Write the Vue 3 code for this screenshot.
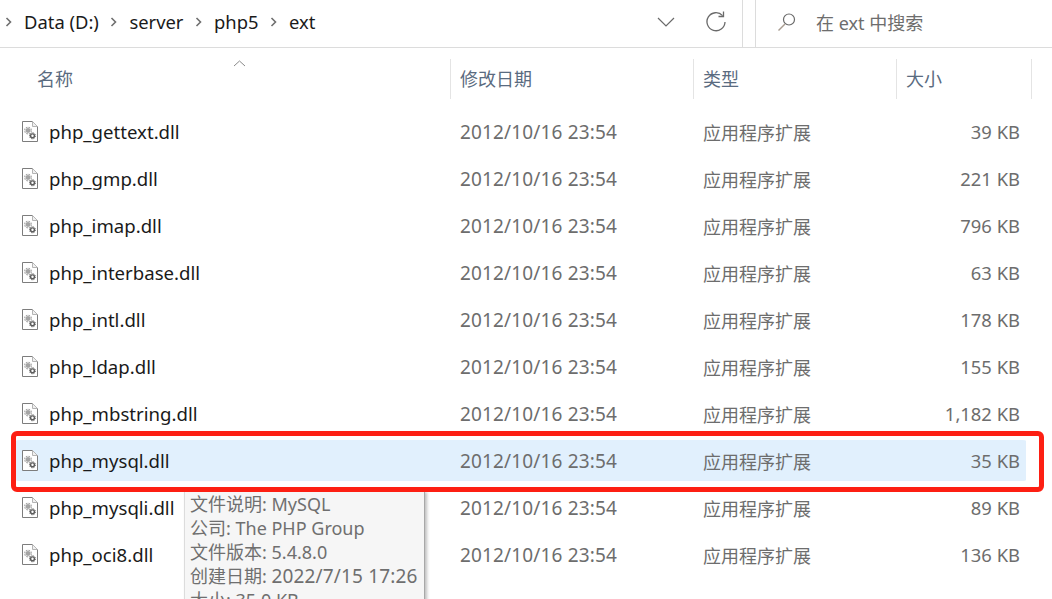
<script setup>
const files = [
  { name: 'php_gettext.dll', size: '39 KB' },
  { name: 'php_gmp.dll', size: '221 KB' },
  { name: 'php_imap.dll', size: '796 KB' },
  { name: 'php_interbase.dll', size: '63 KB' },
  { name: 'php_intl.dll', size: '178 KB' },
  { name: 'php_ldap.dll', size: '155 KB' },
  { name: 'php_mbstring.dll', size: '1,182 KB' },
  { name: 'php_mysql.dll', size: '35 KB', hover: true },
  { name: 'php_mysqli.dll', size: '89 KB' },
  { name: 'php_oci8.dll', size: '136 KB' },
]
const crumbs = ['Data (D:)', 'server', 'php5', 'ext']
const columns = ['修改日期', '类型', '大小']
const tips = [
  { label: '文件说明:', value: 'MySQL' },
  { label: '公司:', value: 'The PHP Group' },
  { label: '文件版本:', value: '5.4.8.0' },
  { label: '创建日期:', value: '2022/7/15 17:26', wide: true },
  { label: '大小:', value: '35.0 KB' },
]
</script>

<template>
  <div class="explorer">
    <div class="topbar">
      <div class="address">
        <div class="crumbs">
          <template v-for="c in crumbs" :key="c">
            <svg class="chev" width="8" height="12" viewBox="0 0 8 12">
              <path d="M1.5 2 L5.5 6 L1.5 10" fill="none" stroke="#6f6f6f" stroke-width="1.6" />
            </svg>
            <span class="crumb">{{ c }}</span>
          </template>
        </div>
        <svg class="drop" width="18" height="10" viewBox="0 0 18 10">
          <path d="M1 1 L9 9 L17 1" fill="none" stroke="#6a6a6a" stroke-width="1.2" />
        </svg>
        <svg class="refresh" width="22" height="22" viewBox="0 0 22 22">
          <path d="M17.6 4.6 A9 9 0 1 0 20 11" fill="none" stroke="#6a6a6a" stroke-width="1.3" />
          <path d="M18.5 0.5 V5.5 H13.5" fill="none" stroke="#6a6a6a" stroke-width="1.3" />
        </svg>
      </div>
      <div class="search">
        <svg width="20" height="20" viewBox="0 0 20 20">
          <circle cx="12" cy="7.5" r="5.5" fill="none" stroke="#6a6a6a" stroke-width="1.2" />
          <path d="M8 12 L1.5 18.5" fill="none" stroke="#a89c90" stroke-width="1.4" />
        </svg>
        <span class="search-text">在 ext 中搜索</span>
      </div>
    </div>

    <div class="header">
      <svg class="sort" width="13" height="7" viewBox="0 0 13 7">
        <path d="M1 6 L6.5 1 L12 6" fill="none" stroke="#8a8a8a" stroke-width="1" />
      </svg>
      <div class="col col-name">名称</div>
      <div class="col col-date">{{ columns[0] }}</div>
      <div class="col col-type">{{ columns[1] }}</div>
      <div class="col col-size">{{ columns[2] }}</div>
    </div>

    <div class="list">
      <div v-for="f in files" :key="f.name" class="row" :class="{ hover: f.hover }">
        <div class="cell-name">
          <svg class="file-icon" width="18" height="23" viewBox="0 0 18 23">
            <path d="M1.5 1.5 H11.5 L16.5 6.5 V21.5 H1.5 Z" fill="#fff" stroke="#7d7d7d" />
            <path d="M11.5 1.5 V6.5 H16.5" fill="#f0f0f0" stroke="#b4b4b4" />
            <circle cx="7" cy="10.5" r="2.4" fill="#a4a4a4" />
            <circle cx="7" cy="10.5" r="3.3" fill="none" stroke="#a4a4a4" stroke-width="1.2" stroke-dasharray="1.6 1" />
            <circle cx="11.5" cy="15.8" r="1.9" fill="#fff" stroke="#5c5c5c" stroke-width="1.4" />
            <circle cx="11.5" cy="15.8" r="3" fill="none" stroke="#5c5c5c" stroke-width="1" stroke-dasharray="1.3 1" />
          </svg>
          <span class="fname">{{ f.name }}</span>
        </div>
        <div class="cell cell-date">2012/10/16 23:54</div>
        <div class="cell cell-type">应用程序扩展</div>
        <div class="cell cell-size">{{ f.size }}</div>
      </div>
    </div>

    <div class="tooltip">
      <div v-for="t in tips" :key="t.label">
        {{ t.label }} <span :class="{ wide: t.wide }">{{ t.value }}</span>
      </div>
    </div>
    <div class="redbox"></div>
  </div>
</template>

<style>
html, body {
  margin: 0;
  background: #fff;
  overflow: hidden;
}
</style>

<style scoped>
.explorer {
  position: relative;
  width: 1052px;
  height: 599px;
  overflow: hidden;
  background: #fff;
  font-family: "Noto Sans", "Noto Sans CJK SC", sans-serif;
  font-size: 18px;
  color: #6d6d6d;
}
.topbar {
  display: flex;
  justify-content: space-between;
  height: 47px;
  border-bottom: 1px solid #dcdcdc;
}
.address {
  display: flex;
  align-items: center;
  width: 743px;
  padding-bottom: 4px;
  box-sizing: border-box;
  border-right: 1px solid #dcdcdc;
}
.crumbs {
  display: flex;
  align-items: center;
  padding-left: 5px;
  flex: 1;
  color: #1a1a1a;
  font-size: 18.4px;
}
.chev {
  margin-right: 11px;
}
.crumb {
  margin-right: 11.5px;
}
.drop {
  margin-right: 30px;
}
.refresh {
  margin-right: 15px;
}
.search {
  display: flex;
  align-items: center;
  gap: 19px;
  width: 297px;
  padding-bottom: 4px;
  border-left: 1px solid #dcdcdc;
  box-sizing: border-box;
}
.search svg {
  margin-left: 21px;
}
.header {
  position: relative;
  display: flex;
  height: 40px;
  margin-top: 11px;
  line-height: 41px;
  color: #5a6b80;
}
.sort {
  position: absolute;
  left: 233px;
  top: 1px;
}
.col {
  box-sizing: border-box;
  padding-left: 9px;
  border-right: 1px solid #e4e4e4;
}
.col-name {
  width: 451px;
  padding-left: 37px;
}
.col-date {
  width: 243px;
}
.col-type {
  width: 203px;
}
.col-size {
  width: 135px;
}
.list {
  margin-top: 9px;
}
.row {
  display: flex;
  align-items: center;
  box-sizing: border-box;
  height: 47px;
  border-top: 3px solid transparent;
  border-bottom: 3px solid transparent;
  margin-left: 16px;
  width: 1010px;
  background-clip: padding-box;
  border-radius: 4px;
}
.row.hover {
  background-color: #e1f0fd;
}
.cell-name {
  display: flex;
  align-items: center;
  width: 444px;
  color: #1a1a1a;
  font-size: 18.6px;
}
.file-icon {
  margin-left: 5px;
  margin-right: 10px;
}
.cell-date {
  width: 243px;
  font-size: 19px;
  letter-spacing: 0.15px;
}
.cell-type {
  width: 203px;
}
.cell-size {
  width: 114px;
  text-align: right;
  font-size: 18.4px;
}
.tooltip {
  position: absolute;
  left: 184px;
  top: 491px;
  width: 241px;
  height: 120px;
  box-sizing: border-box;
  padding: 1px 0 0 5px;
  background: #f6f6f6;
  border-left: 1px solid #dcdcdc;
  border-right: 1px solid #a8a8a8;
  box-shadow: 2px 1px 3px rgba(0, 0, 0, 0.25);
  line-height: 24px;
  color: #6f6f6f;
}
.wide {
  font-size: 19px;
  letter-spacing: 0.15px;
}
.redbox {
  position: absolute;
  left: 11px;
  top: 431px;
  width: 1033px;
  height: 61px;
  box-sizing: border-box;
  border: 5px solid #fd1f13;
  border-radius: 6px;
}
</style>
